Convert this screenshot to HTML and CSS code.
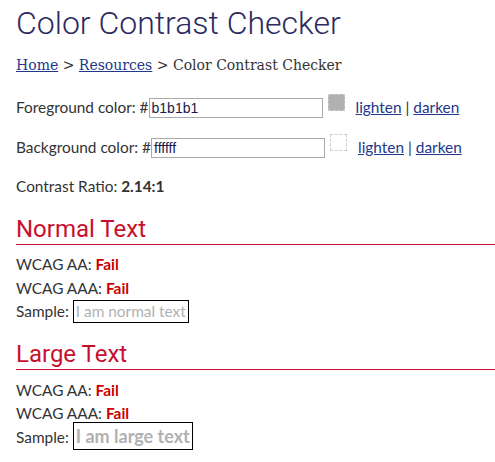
FILE: index.html
```html
<!DOCTYPE html>
<html>
<head>
<meta charset="utf-8">
<link rel="stylesheet" href="styles.css">
</head>
<body>
<main class="page">
  <h1 class="title">Color Contrast Checker</h1>
  <nav class="crumbs"><a href="#">Home</a> &gt; <a href="#">Resources</a> &gt; Color Contrast Checker</nav>

  <div class="color-row">
    <label class="label">Foreground color: #</label><input class="hex" type="text" value="b1b1b1">
    <span class="swatch swatch-fg"></span>
    <span class="tools"><a href="#">lighten</a> | <a href="#">darken</a></span>
  </div>
  <div class="color-row">
    <label class="label">Background color: #</label><input class="hex" type="text" value="ffffff">
    <span class="swatch swatch-bg"></span>
    <span class="tools"><a href="#">lighten</a> | <a href="#">darken</a></span>
  </div>

  <p class="ratio">Contrast Ratio: <strong>2.14:1</strong></p>

  <section class="result">
    <h2 class="result-title">Normal Text</h2>
    <div class="line">WCAG AA: <span class="fail">Fail</span></div>
    <div class="line">WCAG AAA: <span class="fail">Fail</span></div>
    <div class="line">Sample: <span class="sample sample-normal">I am normal text</span></div>
  </section>

  <section class="result result-large">
    <h2 class="result-title">Large Text</h2>
    <div class="line">WCAG AA: <span class="fail">Fail</span></div>
    <div class="line">WCAG AAA: <span class="fail">Fail</span></div>
    <div class="line">Sample: <span class="sample sample-large">I am large text</span></div>
  </section>
</main>
</body>
</html>
```

FILE: styles.css
```css
html, body {
  margin: 0;
  padding: 0;
  background: #fff;
}
.page {
  padding: 0 0 0 16px;
  font-family: Lato, "Open Sans", sans-serif;
  font-size: 15.4px;
  color: #333;
}
.title {
  margin: 0;
  padding-top: 3px;
  font-family: Roboto, sans-serif;
  font-weight: 300;
  font-size: 32px;
  line-height: 40px;
  color: #2c2a5e;
}
.crumbs {
  margin-top: 12px;
  font-family: "DejaVu Serif", serif;
  font-size: 14px;
  line-height: 20px;
  color: #333;
}
.crumbs a, .tools a {
  color: #23388a;
  text-decoration: underline;
}
.color-row {
  display: flex;
  align-items: center;
  height: 20px;
  margin-top: 22px;
}
.color-row + .color-row {
  margin-top: 20px;
}
.label {
  white-space: pre;
}
.hex {
  box-sizing: border-box;
  width: 174px;
  height: 20px;
  margin: 0;
  padding: 1px 2px;
  border: 1px solid #a9a9a9;
  font-family: "Liberation Sans", Arial, sans-serif;
  font-size: 14px;
  color: #1a1a4a;
  position: relative;
  top: 1px;
}
.swatch {
  box-sizing: border-box;
  width: 17px;
  height: 17px;
  margin-left: 5px;
  border: 1px dashed #ccc;
  align-self: flex-start;
  margin-top: -3px;
}
.swatch-fg {
  background: #b1b1b1;
}
.swatch-bg {
  background: #fff;
}
.tools {
  margin-left: 11px;
  color: #333;
}
.ratio {
  margin: 19px 0 0;
  line-height: 20px;
}
.ratio strong {
  font-weight: 700;
}
.result-title {
  margin: 18px 0 0;
  padding-bottom: 0;
  border-bottom: 1px solid #c8102e;
  font-family: Roboto, sans-serif;
  font-weight: 400;
  font-size: 24px;
  line-height: 30px;
  color: #c8102e;
}
.result-large .result-title {
  margin-top: 15px;
}
.line {
  line-height: 23.5px;
}
.result-title + .line {
  margin-top: 8px;
}
.result-large .result-title + .line {
  margin-top: 9px;
}
.fail {
  color: #cc0000;
  font-weight: 700;
}
.sample {
  display: inline-block;
  border: 1px solid #000;
  color: #b1b1b1;
  padding: 0 2px;
  line-height: 21px;
}
.sample-large {
  font-size: 18px;
  font-weight: 700;
  line-height: 26px;
  margin-top: -5px;
}
```
